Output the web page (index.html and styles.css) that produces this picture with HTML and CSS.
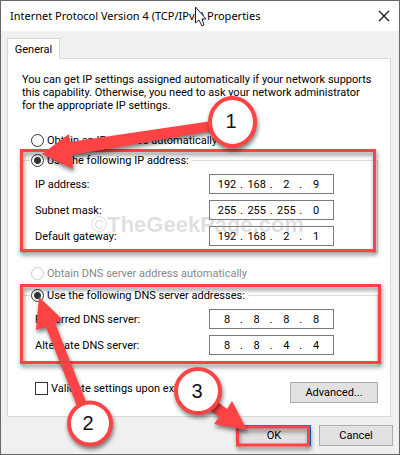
FILE: index.html
```html
<!DOCTYPE html>
<html lang="en">
<head>
<meta charset="utf-8">
<title>Internet Protocol Version 4 (TCP/IPv4) Properties</title>
<link rel="stylesheet" href="styles.css">
</head>
<body>
<main class="dialog">
  <header class="titlebar">
    <h1>Internet Protocol Version 4 (TCP/IPv4) Properties</h1>
    <button class="close" type="button" aria-label="Close"><svg width="12" height="12" viewBox="0 0 12 12"><path d="M1 1L11 11M11 1L1 11" stroke="#111" stroke-width="1.2"/></svg></button>
  </header>
  <form class="body">
    <button class="tab" type="button">General</button>
    <section class="panel">
      <p class="intro">You can get IP settings assigned automatically if your network supports<br>this capability. Otherwise, you need to ask your network administrator<br>for the appropriate IP settings.</p>
      <label class="option"><input type="radio" name="ip">Obtain an IP address automatically</label>
      <fieldset class="group">
        <legend><label class="option"><input type="radio" name="ip" checked>Use the following IP address:</label></legend>
        <div class="row"><label for="ip1">IP address:</label>
          <div class="ip"><input id="ip1" value="192"><span>.</span><input aria-label="IP address 2" value="168"><span>.</span><input aria-label="IP address 3" value="2"><span>.</span><input aria-label="IP address 4" value="9"></div></div>
        <div class="row"><label for="sm1">Subnet mask:</label>
          <div class="ip"><input id="sm1" value="255"><span>.</span><input aria-label="Subnet mask 2" value="255"><span>.</span><input aria-label="Subnet mask 3" value="255"><span>.</span><input aria-label="Subnet mask 4" value="0"></div></div>
        <div class="row"><label for="gw1">Default gateway:</label>
          <div class="ip"><input id="gw1" value="192"><span>.</span><input aria-label="Gateway 2" value="168"><span>.</span><input aria-label="Gateway 3" value="2"><span>.</span><input aria-label="Gateway 4" value="1"></div></div>
      </fieldset>
      <label class="option disabled"><input type="radio" name="dns" disabled>Obtain DNS server address automatically</label>
      <fieldset class="group">
        <legend><label class="option"><input type="radio" name="dns" checked>Use the following DNS server addresses:</label></legend>
        <div class="row"><label for="pd1">Preferred DNS server:</label>
          <div class="ip"><input id="pd1" value="8"><span>.</span><input aria-label="Preferred DNS 2" value="8"><span>.</span><input aria-label="Preferred DNS 3" value="8"><span>.</span><input aria-label="Preferred DNS 4" value="8"></div></div>
        <div class="row"><label for="ad1">Alternate DNS server:</label>
          <div class="ip"><input id="ad1" value="8"><span>.</span><input aria-label="Alternate DNS 2" value="8"><span>.</span><input aria-label="Alternate DNS 3" value="4"><span>.</span><input aria-label="Alternate DNS 4" value="4"></div></div>
      </fieldset>
      <div class="bottom">
        <label class="check"><input type="checkbox">Validate settings upon exit</label>
        <button class="btn advanced" type="button">Advanced...</button>
      </div>
    </section>
    <footer class="actions">
      <button class="btn primary" type="button">OK</button>
      <button class="btn" type="button">Cancel</button>
    </footer>
  </form>
  <svg class="overlay" viewBox="0 0 400 455" aria-hidden="true">
    <text class="mark" x="91" y="232"><tspan class="copy">©</tspan>TheGeekPage.com</text>
    <g class="shadow" fill="none" stroke="#fd4343" stroke-width="3">
      <rect x="21.5" y="150.5" width="353" height="100"/>
      <rect x="21.5" y="285.5" width="358" height="77"/>
      <rect x="237.5" y="427" width="71" height="18"/>
    </g>
    <g class="shadow" fill="#fd4343">
      <path d="M42 154L69 134L70 142L212 121V131L72 155L73 169Z"/>
      <path d="M39 297L63 320L55 323L86 402L77 406L46 327L36 330Z"/>
      <path d="M247 430L214 424L219 417L208 408L214 399L227 409L232 401Z"/>
    </g>
    <g class="shadow" fill="#fff" stroke="#fd4343" stroke-width="4">
      <ellipse cx="232.5" cy="122" rx="22.5" ry="24"/>
      <circle cx="90" cy="423.5" r="21"/>
      <circle cx="198" cy="391" r="22"/>
    </g>
    <g class="number"><text x="231" y="128">1</text><text x="88" y="430">2</text><text x="197" y="398">3</text></g>
    <path d="M195.500 7V23L199 20L202 26L204 25L202 19H206Z" fill="#fff" stroke="#223"/>
  </svg>
</main>
</body>
</html>
```
FILE: styles.css
```css
* { box-sizing: border-box; }
body { margin: 0; background: #777; color: #000; font: 11px/13px Roboto, sans-serif; }
.dialog { position: relative; min-height: 100vh; background: #f0f0f0; border: 1px solid #6a6668; }
.titlebar { display: flex; align-items: center; justify-content: space-between; height: 30px; padding: 0 9px; background: #fff; }
h1 { margin: 0; font: 11px/16px "Noto Sans", "Open Sans", sans-serif; }
.close { display: flex; padding: 0; border: 0; background: none; }
.body { padding: 7px 6px 0; }
.tab { display: block; width: 53px; height: 21px; padding: 0; border: 1px solid #d9d9d9; border-bottom: 0; margin-bottom: -1px; position: relative; background: #fff; font: inherit; color: inherit; }
.panel { border: 1px solid #d9d9d9; background: #fff; margin-right: 2px; padding: 14px 12px 13px 14px; }
.intro { margin: 0 0 18px; white-space: nowrap; }
.option { display: flex; align-items: center; gap: 3px; height: 20px; padding-left: 9px; white-space: nowrap; }
input[type="radio"] { appearance: none; width: 13px; height: 13px; margin: 0; border: 1px solid #333; border-radius: 50%; background: #fff; }
input[type="radio"]:checked { background: radial-gradient(circle, #333 3px, #fff 4px); }
.disabled { margin-bottom: 2px; color: #888; }
.disabled input[type="radio"] { border-color: #ccc; }
.group { min-width: 0; margin: 0 0 10px; padding: 4px 43px 6px 12px; border: 1px solid #dcdcdc; }
legend { margin-left: -4px; padding: 0 3px 0 0; }
legend .option { padding-left: 0; }
.row { display: flex; align-items: center; justify-content: space-between; height: 20px; }
.row + .row { margin-top: 6px; }
.ip { display: flex; align-items: center; width: 125px; height: 20px; padding: 0 4px; border: 1px solid #7a7a7a; background: #fff; }
.ip input { width: 26px; height: 16px; padding: 0; border: 0; background: none; text-align: center; font: inherit; color: inherit; }
.ip span { width: 4px; }
.bottom { display: flex; justify-content: space-between; margin-top: 20px; }
.check { display: flex; align-items: center; gap: 3px; height: 13px; padding-left: 13px; }
input[type="checkbox"] { appearance: none; width: 13px; height: 13px; margin: 0; border: 1px solid #333; background: #fff; }
.btn { width: 74px; height: 21px; padding: 0; border: 1px solid #adadad; background: #e1e1e1; font: inherit; color: inherit; }
.advanced { width: 88px; }
.primary { border-color: #0078d7; }
.actions { display: flex; justify-content: flex-end; gap: 8px; padding-top: 8px; }
.overlay { position: absolute; top: -1px; left: -1px; width: 400px; height: 455px; pointer-events: none; }
.shadow { filter: drop-shadow(1px 3px 2px rgba(0, 0, 0, 0.5)); }
.mark { font: bold 22px "Liberation Sans", sans-serif; fill: #999; opacity: 0.3; }
.copy { font-weight: normal; }
.number { font: 20px "Liberation Sans", sans-serif; text-anchor: middle; fill: #111; }
```
